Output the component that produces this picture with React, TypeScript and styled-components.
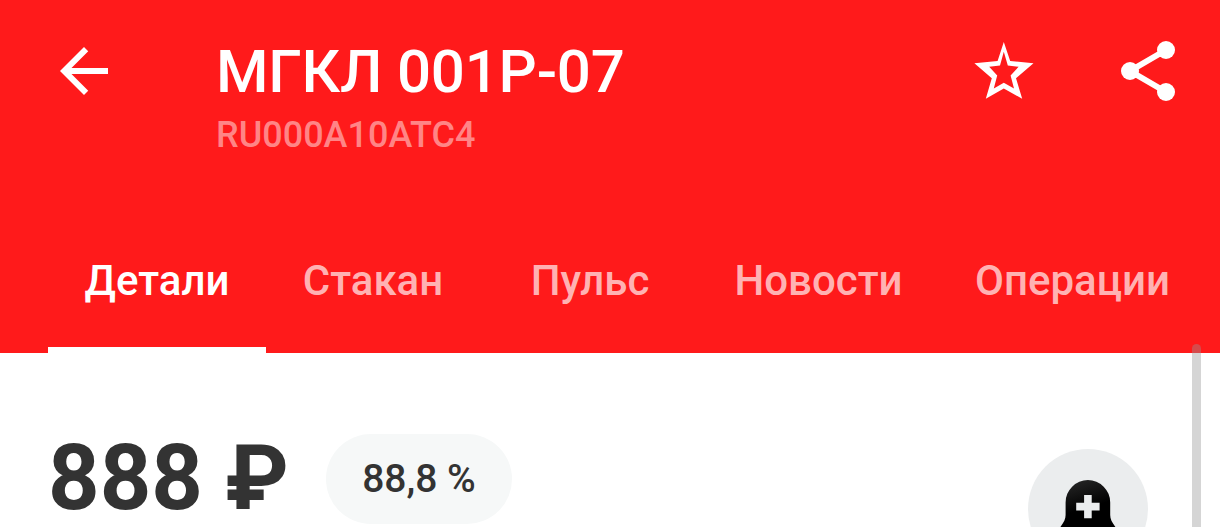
import React from "react";
import styled, { createGlobalStyle } from "styled-components";

const GlobalStyle = createGlobalStyle`
  * {
    box-sizing: border-box;
  }

  body {
    margin: 0;
    overflow: hidden;
    background: #fff;
    font-family: Roboto, "Noto Sans", sans-serif;
  }
`;

const StyledScreen = styled.div`
  position: relative;
  width: 1220px;
  height: 527px;
  overflow: hidden;
  background: #fff;
`;

const StyledHeader = styled.header`
  display: flex;
  flex-direction: column;
  height: 353px;
  background: #ff1a1b;
`;

const StyledToolbar = styled.div`
  display: flex;
  align-items: flex-start;
  height: 208px;
  padding: 35px 36px 0 48px;
`;

const StyledIconButton = styled.button`
  display: flex;
  flex: none;
  width: 72px;
  height: 72px;
  padding: 0;
  border: 0;
  background: none;
  color: #fff;

  & + & {
    margin-left: 72px;
  }
`;

const StyledTitleBlock = styled.div`
  flex: 1;
  padding-left: 96px;
`;

const StyledTitle = styled.h1`
  margin: 0;
  color: #fff;
  font-size: 60px;
  font-weight: 500;
  letter-spacing: -0.2px;
  line-height: 73px;
`;

const StyledSubtitle = styled.div`
  margin-top: 6px;
  color: #ff8586;
  font-size: 36px;
  font-weight: 500;
  line-height: 42px;
`;

const StyledTabs = styled.nav`
  display: flex;
  flex: 1;
  padding-left: 48px;
`;

const StyledTab = styled.button<{ $active?: boolean; $width: number }>`
  flex: none;
  width: ${(props) => props.$width}px;
  padding: 6px 0 0;
  border: 0;
  border-bottom: 6px solid ${(props) => (props.$active ? "#fff" : "transparent")};
  background: none;
  color: ${(props) => (props.$active ? "#fff" : "#ffb2b3")};
  font-family: inherit;
  font-size: 42px;
  font-weight: 500;
  white-space: nowrap;
`;

const StyledContent = styled.main`
  display: flex;
  align-items: flex-start;
  padding: 81px 72px 0 48px;
`;

const StyledPrice = styled.div`
  width: 278px;
  color: #333;
  font-size: 90px;
  font-weight: 700;
  line-height: 90px;
  white-space: nowrap;
`;

const StyledPill = styled.div`
  width: 186px;
  height: 90px;
  border-radius: 45px;
  background: #f6f8f8;
  color: #333;
  font-size: 39px;
  font-weight: 500;
  line-height: 90px;
  text-align: center;
`;

const StyledBellButton = styled.button`
  display: flex;
  width: 120px;
  height: 120px;
  margin: 15px 0 0 auto;
  padding: 0;
  border: 0;
  border-radius: 50%;
  background: #ebedee;
`;

const StyledScrollbar = styled.div`
  position: absolute;
  top: 344px;
  left: 1192px;
  width: 9px;
  height: 200px;
  border-radius: 5px;
  background: rgba(150, 150, 150, 0.4);
`;

const tabs = [
  { name: "Детали", width: 218 },
  { name: "Стакан", width: 214 },
  { name: "Пульс", width: 220 },
  { name: "Новости", width: 237 },
  { name: "Операции", width: 271 },
];

const BackIcon = () => (
  <svg width="72" height="72" viewBox="0 0 24 24" fill="currentColor">
    <path d="M20 11H7.83l5.59-5.59L12 4l-8 8 8 8 1.41-1.41L7.83 13H20v-2z" />
  </svg>
);

const StarIcon = () => (
  <svg width="72" height="72" viewBox="0 0 72 72" fill="currentColor">
    <path
      fillRule="evenodd"
      d="M35.8 7L42.2 26L65.5 28.2L48 43.2L54.2 63.8L35.8 53.4L17.8 63.8L23.8 43.2L6.4 28.2L29.6 26ZM35.8 16.8L32 30.4L21.2 31.8L29.2 40.4L25.8 53.6L35.8 47.8L46 53.6L42.6 40.4L50.6 31.8L39.8 30.4Z"
    />
  </svg>
);

const ShareIcon = () => (
  <svg width="72" height="72" viewBox="0 0 72 72" fill="currentColor">
    <path d="M54 15L18 36l36 21" fill="none" stroke="currentColor" strokeWidth="6" />
    <circle cx="54" cy="15" r="9" />
    <circle cx="18" cy="36" r="9" />
    <circle cx="54" cy="57" r="9" />
  </svg>
);

const BellIcon = () => (
  <svg width="120" height="120" viewBox="0 0 120 120">
    <defs>
      <linearGradient id="bell" x1="0" y1="0" x2="0.3" y2="1">
        <stop offset="0" stopColor="#2b2b2b" />
        <stop offset="0.6" stopColor="#000" />
      </linearGradient>
    </defs>
    <path
      d="M37.6 53.4a22.3 22.3 0 0 1 44.6 0V66c0 4 1.6 7 5.2 12v8H32.4v-8c3.600-5 5.200-8 5.200-12z"
      fill="url(#bell)"
    />
    <path d="M59.900 45.900v23.400M48.200 57.600h23.400" stroke="#ebedee" strokeWidth="7.600" />
  </svg>
);

class App extends React.Component {
  render() {
    return (
      <>
        <GlobalStyle />
        <StyledScreen>
          <StyledHeader>
            <StyledToolbar>
              <StyledIconButton aria-label="Назад">
                <BackIcon />
              </StyledIconButton>
              <StyledTitleBlock>
                <StyledTitle>МГКЛ 001Р-07</StyledTitle>
                <StyledSubtitle>RU000A10ATC4</StyledSubtitle>
              </StyledTitleBlock>
              <StyledIconButton aria-label="В избранное">
                <StarIcon />
              </StyledIconButton>
              <StyledIconButton aria-label="Поделиться">
                <ShareIcon />
              </StyledIconButton>
            </StyledToolbar>
            <StyledTabs>
              {tabs.map((tab, index) => (
                <StyledTab key={tab.name} $active={index === 0} $width={tab.width}>
                  {tab.name}
                </StyledTab>
              ))}
            </StyledTabs>
          </StyledHeader>
          <StyledContent>
            <StyledPrice>888 ₽</StyledPrice>
            <StyledPill>88,8 %</StyledPill>
            <StyledBellButton aria-label="Уведомления">
              <BellIcon />
            </StyledBellButton>
          </StyledContent>
          <StyledScrollbar />
        </StyledScreen>
      </>
    );
  }
}

export default App;
